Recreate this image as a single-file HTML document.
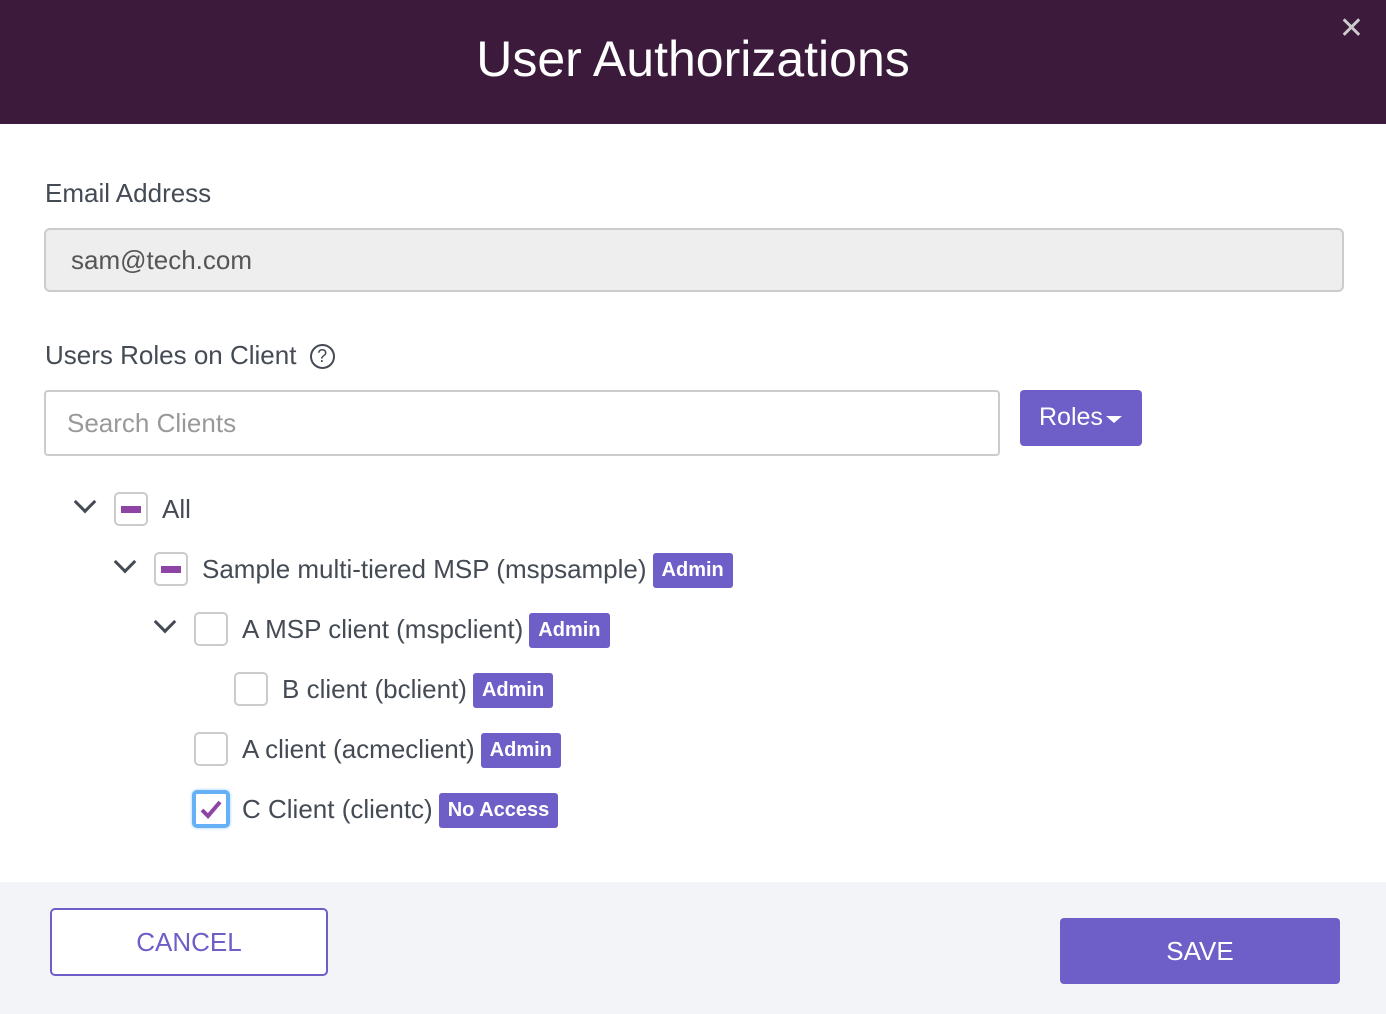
<!DOCTYPE html>
<html><head><meta charset="utf-8"><style>
*{box-sizing:border-box;margin:0;padding:0}
body{width:1386px;height:1014px;overflow:hidden;background:#fff;font-family:"Liberation Sans",sans-serif;color:#454b54;position:relative}
.hdr{position:absolute;left:0;top:0;width:1386px;height:124px;background:#3b1a3b;color:#fff;text-align:center;font-size:50px;line-height:118px}
.x{position:absolute;right:22px;top:14px;color:#ccc;font-size:30px;line-height:30px}
.lbl{position:absolute;left:45px;font-size:26px;color:#454b54}
.email{position:absolute;left:44px;top:228px;width:1300px;height:64px;background:#eeeeee;border:2px solid #ccc;border-radius:6px;font-size:26px;line-height:60px;padding-left:25px;color:#555}
.search{position:absolute;left:44px;top:390px;width:956px;height:66px;border:2px solid #ccc;border-radius:4px;font-size:26px;line-height:62px;padding-left:21px;color:#999}
.roles{position:absolute;left:1020px;top:390px;width:122px;height:56px;background:#6e5ec7;border-radius:4px;color:#fff;font-size:25px;line-height:55px;padding-left:19px}
.roles:after{content:"";position:absolute;left:86px;top:26px;border-left:8px solid transparent;border-right:8px solid transparent;border-top:7px solid #fff}
.row{position:absolute;height:40px;font-size:26px;line-height:40px;white-space:nowrap}
.chev{position:absolute;width:16px;height:16px;border-right:3px solid #454b54;border-bottom:3px solid #454b54;transform:rotate(45deg)}
.cb{position:absolute;width:34px;height:34px;border:2px solid #ccc;border-radius:5px;background:#fff}
.cb.ind:after{content:"";position:absolute;left:5px;top:12px;width:20px;height:7px;background:#8e44a4}
.txt{position:absolute}
.badge{display:inline-block;background:#6e5ec7;color:#fff;font-weight:bold;font-size:20px;line-height:35px;height:35px;padding:0 9px;border-radius:3px;vertical-align:middle;margin-left:6px;position:relative;top:-1px}
.foot{position:absolute;left:0;top:882px;width:1386px;height:132px;background:#f3f4f8}
.cancel{position:absolute;left:50px;top:908px;width:278px;height:68px;border:2px solid #6e5ec7;border-radius:5px;background:#fff;color:#6e5ec7;font-size:26px;text-align:center;line-height:64px}
.save{position:absolute;left:1060px;top:918px;width:280px;height:66px;background:#6e5ec7;border-radius:4px;color:#fff;font-size:26px;text-align:center;line-height:66px}
</style></head><body>
<div class="hdr">User Authorizations</div>
<div class="x">✕</div>
<div class="lbl" style="top:178px">Email Address</div>
<div class="email">sam@tech.com</div>
<div class="lbl" style="top:340px">Users Roles on Client <span style="display:inline-block;width:25px;height:25px;border:2px solid #454b54;border-radius:50%;font-size:18px;line-height:21px;text-align:center;vertical-align:2px;margin-left:6px">?</span></div>
<div class="search">Search Clients</div>
<div class="roles">Roles</div>

<div class="chev" style="left:77px;top:494px"></div>
<div class="cb ind" style="left:114px;top:492px"></div>
<div class="row" style="left:162px;top:489px">All</div>

<div class="chev" style="left:117px;top:554px"></div>
<div class="cb ind" style="left:154px;top:552px"></div>
<div class="row" style="left:202px;top:549px">Sample multi-tiered MSP (mspsample)<span class="badge">Admin</span></div>

<div class="chev" style="left:157px;top:614px"></div>
<div class="cb" style="left:194px;top:612px"></div>
<div class="row" style="left:242px;top:609px">A MSP client (mspclient)<span class="badge">Admin</span></div>

<div class="cb" style="left:234px;top:672px"></div>
<div class="row" style="left:282px;top:669px">B client (bclient)<span class="badge">Admin</span></div>

<div class="cb" style="left:194px;top:732px"></div>
<div class="row" style="left:242px;top:729px">A client (acmeclient)<span class="badge">Admin</span></div>

<div class="cb" style="left:192px;top:790px;width:38px;height:38px;border:4px solid #66b0f5;box-shadow:0 0 3px #9fd0ff"><svg width="30" height="30" style="position:absolute;left:0;top:0"><path d="M6 16 L12 22 L24 8" stroke="#8e44a4" stroke-width="4" fill="none"/></svg></div>
<div class="row" style="left:242px;top:789px">C Client (clientc)<span class="badge">No Access</span></div>

<div class="foot"></div>
<div class="cancel">CANCEL</div>
<div class="save">SAVE</div>
</body></html>
